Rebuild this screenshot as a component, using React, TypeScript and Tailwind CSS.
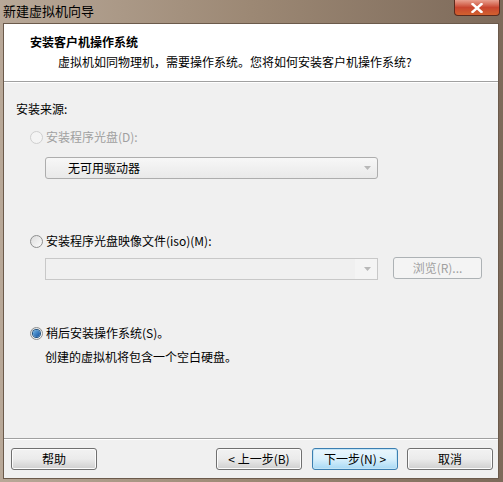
import React from "react";

const font = { fontFamily: '"Noto Sans CJK SC", "Microsoft YaHei", sans-serif' };

function Radio({ checked, disabled }: { checked?: boolean; disabled?: boolean }) {
  return (
    <span
      className={`relative inline-flex h-[13px] w-[13px] items-center justify-center rounded-full border ${
        disabled ? "border-[#cfcfcf] bg-[#f4f4f4]" : "border-[#8e8f8f] bg-gradient-to-br from-[#dcdcdc] to-[#fbfbfb]"
      }`}
    >
      {checked && (
        <span className="h-[7px] w-[7px] rounded-full bg-gradient-to-br from-[#6fb5e8] to-[#0d4f9c] ring-1 ring-[#1c5180]" />
      )}
    </span>
  );
}

function Arrow({ light }: { light?: boolean }) {
  return (
    <svg width="7" height="4" viewBox="0 0 7 4">
      <path d="M0 0h7L3.5 4z" fill={light ? "#b8b8b8" : "#a0a0a0"} />
    </svg>
  );
}

function Button({ label, focused, disabled, width = 86 }: { label: string; focused?: boolean; disabled?: boolean; width?: number }) {
  return (
    <div
      className={`flex h-[22px] items-center justify-center rounded-[3px] border text-[12px] ${
        focused
          ? "border-[#3c7fb1] bg-gradient-to-b from-[#eaf6fd] via-[#d9f0fc] to-[#a7d9f5] shadow-[inset_0_0_0_1px_#c4e5f6] text-black"
          : disabled
          ? "border-[#adb2b5] bg-[#f4f4f4] text-[#a0a0a0]"
          : "border-[#707070] bg-gradient-to-b from-[#f2f2f2] via-[#ebebeb] to-[#cfcfcf] shadow-[inset_0_0_0_1px_#fcfcfc] text-black"
      }`}
      style={{ width }}
    >
      {label}
    </div>
  );
}

export default function App() {
  return (
    <div
      className="flex h-[482px] w-[503px] flex-col overflow-hidden bg-gradient-to-r from-[#b8a898] via-[#9c8874] to-[#7d6a5a]"
      style={font}
    >
      {/* title bar */}
      <div className="relative flex h-[23px] items-center pl-[3px] text-[13px] text-black">
        <span className="-mt-[1px]">新建虚拟机向导</span>
        <div className="absolute right-[3px] top-0 flex h-[16px] w-[46px] items-center justify-center rounded-b-[4px] border border-t-0 border-[#5a2a1e] bg-gradient-to-b from-[#e8a090] via-[#c8452f] to-[#d2612f]">
          <svg width="12" height="10" viewBox="0 0 12 10">
            <path d="M1.5 1l9 8M10.5 1l-9 8" stroke="#fff" strokeWidth="2.4" strokeLinecap="square" />
          </svg>
        </div>
      </div>

      {/* client */}
      <div className="ml-[3px] mr-[4px] flex h-[456px] flex-col border border-[#6b5a4b] bg-[#f0f0f0]">
        {/* header */}
        <div className="h-[58px] border-b border-[#a0a0a0] bg-white pt-[9px]">
          <div className="pl-[26px] text-[12px] font-bold leading-[18px] text-black">安装客户机操作系统</div>
          <div className="mt-[2px] pl-[54px] text-[12px] leading-[18px] text-black">
            虚拟机如同物理机，需要操作系统。您将如何安装客户机操作系统?
          </div>
        </div>
        <div className="h-px bg-white" />

        {/* body */}
        <div className="flex flex-1 flex-col px-[12px] text-[12px] text-black">
          <div className="mt-[17px] leading-[18px]">安装来源:</div>

          <div className="mt-[10px] flex items-center gap-[3px] pl-[14px] leading-[18px] text-[#a0a0a0]">
            <Radio disabled />
            <span>安装程序光盘(D):</span>
          </div>
          <div className="ml-[29px] mt-[11px] flex h-[22px] w-[333px] items-center justify-between rounded-[3px] border border-[#adadad] bg-gradient-to-b from-[#f7f7f7] to-[#e9e9e9] pl-[22px] pr-[6px]">
            <span>无可用驱动器</span>
            <Arrow light />
          </div>

          <div className="mt-[53px] flex items-center gap-[3px] pl-[14px] leading-[18px]">
            <Radio />
            <span>安装程序光盘映像文件(iso)(M):</span>
          </div>
          <div className="mt-[7px] flex items-start">
            <div className="ml-[29px] mt-[1px] flex h-[22px] w-[333px] items-center justify-end border border-[#c8c8c8] bg-[#f0f0f0] pr-[6px] shadow-[inset_-22px_0_0_#f4f4f4]">
              <Arrow light />
            </div>
            <div className="ml-[15px]">
              <Button label="浏览(R)..." disabled width={89} />
            </div>
          </div>

          <div className="mt-[44px] flex items-center gap-[3px] pl-[14px] leading-[18px]">
            <Radio checked />
            <span>稍后安装操作系统(S)。</span>
          </div>
          <div className="ml-[29px] mt-[6px] leading-[18px]">创建的虚拟机将包含一个空白硬盘。</div>

          <div className="flex-1" />
        </div>

        {/* footer */}
        <div className="border-t border-[#a0a0a0]">
          <div className="h-px bg-white" />
          <div className="flex h-[38px] items-start pl-[7px] pt-[8px]">
            <Button label="帮助" width={86} />
            <div className="ml-[119px]">
              <Button label="< 上一步(B)" width={86} />
            </div>
            <div className="ml-[10px]">
              <Button label="下一步(N) >" focused width={86} />
            </div>
            <div className="ml-[9px]">
              <Button label="取消" width={86} />
            </div>
          </div>
        </div>
      </div>
    </div>
  );
}
